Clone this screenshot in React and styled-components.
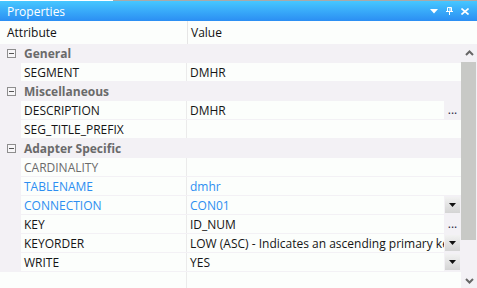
import React from 'react';
import styled, { createGlobalStyle } from 'styled-components';

const GlobalStyle = createGlobalStyle`
  body {
    margin: 0;
    background: #ffffff;
    font-family: "Open Sans", "Noto Sans", sans-serif;
    font-size: 12px;
  }
`;

const sections = [
  {
    name: 'General',
    rows: [{ attr: 'SEGMENT', value: 'DMHR' }],
  },
  {
    name: 'Miscellaneous',
    rows: [
      { attr: 'DESCRIPTION', value: 'DMHR', button: 'dots' },
      { attr: 'SEG_TITLE_PREFIX', value: '' },
    ],
  },
  {
    name: 'Adapter Specific',
    rows: [
      { attr: 'CARDINALITY', value: '', tone: 'muted' },
      { attr: 'TABLENAME', value: 'dmhr', tone: 'link' },
      { attr: 'CONNECTION', value: 'CON01', tone: 'link', button: 'drop' },
      { attr: 'KEY', value: 'ID_NUM', button: 'dots' },
      {
        attr: 'KEYORDER',
        value: 'LOW (ASC) - Indicates an ascending primary key',
        button: 'drop',
      },
      { attr: 'WRITE', value: 'YES', button: 'drop' },
    ],
  },
];

const App = () => {
  return (
    <>
      <GlobalStyle />
      <Panel>
        <TopEdge />
        <TitleBar>
          <TitleText>Properties</TitleText>
          <TitleIcons>
            <svg width="8" height="5" viewBox="0 0 8 5">
              <path d="M0 0h8L4 4.5z" fill="#fff" />
            </svg>
            <svg width="7" height="8" viewBox="0 0 7 8">
              <path d="M1.5 0.5h4v4h-4z M0 4.5h7 M3.5 4.5v3.5 M4 0.5v4" stroke="#fff" strokeWidth="1" fill="none" />
            </svg>
            <svg width="8" height="7" viewBox="0 0 8 7">
              <path d="M0.5 0.5l7 6 M7.5 0.5l-7 6" stroke="#fff" strokeWidth="1.6" />
            </svg>
          </TitleIcons>
        </TitleBar>

        <HeaderRow>
          <HeaderCell>Attribute</HeaderCell>
          <HeaderCell $value>Value</HeaderCell>
        </HeaderRow>

        <Body>
          <Grid>
            {sections.map(section => (
              <React.Fragment key={section.name}>
                <CategoryRow>
                  <ExpandBox />
                  <CategoryName>{section.name}</CategoryName>
                </CategoryRow>
                {section.rows.map(row => (
                  <PropRow key={row.attr}>
                    <Gutter />
                    <AttrCell $tone={row.tone}>{row.attr}</AttrCell>
                    <ValueWrap>
                      <ValueCell $tone={row.tone}>{row.value}</ValueCell>
                      {row.button === 'dots' && <DotsButton>...</DotsButton>}
                      {row.button === 'drop' && (
                        <DropButton>
                          <svg width="7" height="4" viewBox="0 0 7 4">
                            <path d="M0 0h7L3.5 4z" fill="#111" />
                          </svg>
                        </DropButton>
                      )}
                    </ValueWrap>
                  </PropRow>
                ))}
              </React.Fragment>
            ))}
            <EmptyArea>
              <EmptyAttr />
              <EmptyValue />
            </EmptyArea>
          </Grid>

          <Scrollbar>
            <ScrollArrow>
              <svg width="9" height="6" viewBox="0 0 9 6">
                <path d="M1 5l3.5-3.5L8 5" stroke="#666" strokeWidth="2" fill="none" />
              </svg>
            </ScrollArrow>
            <Thumb />
            <Track />
            <ScrollArrow $bottom>
              <svg width="9" height="6" viewBox="0 0 9 6">
                <path d="M1 1l3.5 3.5L8 1" stroke="#666" strokeWidth="2" fill="none" />
              </svg>
            </ScrollArrow>
          </Scrollbar>
        </Body>
      </Panel>
    </>
  );
};

export default App;

const Panel = styled.div`
  display: flex;
  flex-direction: column;
  width: 477px;
  height: 288px;
  overflow: hidden;
  background: #fcfefc;
`;

const TopEdge = styled.div`
  height: 1px;
  background: linear-gradient(to right, #ffffff 113px, #a9a9a9 113px);
`;

const TitleBar = styled.div`
  display: flex;
  align-items: center;
  height: 20px;
  padding: 0 7px;
  background: linear-gradient(to bottom, #46c7ff, #2b8ef3);
`;

const TitleText = styled.span`
  color: #ffffff;
  font-size: 12px;
  line-height: 20px;
  padding-top: 1px;
`;

const TitleIcons = styled.div`
  display: flex;
  align-items: center;
  gap: 8px;
  margin-left: auto;
  margin-right: 1px;
`;

const HeaderRow = styled.div`
  display: grid;
  grid-template-columns: 187px 1fr;
  height: 23px;
  background: #fcfefc;
`;

const HeaderCell = styled.div`
  display: flex;
  align-items: center;
  padding-left: ${p => (p.$value ? '3px' : '7px')};
  border-left: ${p => (p.$value ? '1px solid #e6e6e6' : 'none')};
  color: #111;
`;

const Body = styled.div`
  display: flex;
  flex: 1;
  min-height: 0;
`;

const Grid = styled.div`
  display: flex;
  flex-direction: column;
  flex: 1;
`;

const CategoryRow = styled.div`
  display: flex;
  align-items: center;
  height: 19px;
  background: #f3f1f5;
`;

const ExpandBox = styled.div`
  position: relative;
  box-sizing: border-box;
  width: 9px;
  height: 9px;
  margin-left: 7px;
  margin-right: 8px;
  border: 1px solid #8e8e8e;
  background: #f7f6f8;
  &::after {
    content: '';
    position: absolute;
    left: 1px;
    top: 3px;
    width: 5px;
    height: 1px;
    background: #555;
  }
`;

const CategoryName = styled.span`
  font-weight: bold;
  color: #6a6a6a;
`;

const PropRow = styled.div`
  display: grid;
  grid-template-columns: 21px 166px 1fr;
  height: 19px;
  box-sizing: border-box;
  background: #f3f1f5;
`;

const Gutter = styled.div`
  background: #f3f1f5;
`;

const toneColor = tone =>
  tone === 'link' ? '#2d8ef1' : tone === 'muted' ? '#6b6b6b' : '#151515';

const AttrCell = styled.div`
  display: flex;
  align-items: center;
  padding-left: 3px;
  height: 18px;
  background: #fcfefc;
  border-right: 1px solid #ebebeb;
  color: ${p => toneColor(p.$tone)};
  white-space: nowrap;
  overflow: hidden;
`;

const ValueWrap = styled.div`
  display: flex;
  height: 18px;
  min-width: 0;
`;

const ValueCell = styled.div`
  display: flex;
  align-items: center;
  flex: 1;
  min-width: 0;
  padding-left: 3px;
  background: #fcfefc;
  color: ${p => toneColor(p.$tone)};
  white-space: nowrap;
  overflow: hidden;
`;

const DotsButton = styled.div`
  display: flex;
  align-items: center;
  justify-content: center;
  width: 17px;
  background: #f3f1f5;
  color: #2a2440;
  font-size: 12px;
  line-height: 14px;
`;

const DropButton = styled.div`
  display: flex;
  align-items: center;
  justify-content: center;
  width: 15px;
  height: 16px;
  margin: 1px 1px 0 1px;
  background: linear-gradient(to bottom, #f2f2f2, #d4d4d4);
`;

const EmptyArea = styled.div`
  display: grid;
  grid-template-columns: 187px 1fr;
  flex: 1;
`;

const EmptyAttr = styled.div`
  background: #fcfefc;
  border-right: 1px solid #ebebeb;
`;

const EmptyValue = styled.div`
  background: #fcfefc;
`;

const Scrollbar = styled.div`
  display: flex;
  flex-direction: column;
  width: 16px;
  background: #f3f1f5;
`;

const ScrollArrow = styled.div`
  display: flex;
  align-items: ${p => (p.$bottom ? 'flex-end' : 'center')};
  justify-content: center;
  height: 18px;
  padding-bottom: ${p => (p.$bottom ? '4px' : '0')};
  box-sizing: border-box;
  flex-shrink: 0;
`;

const Thumb = styled.div`
  height: 178px;
  margin: 0 1px 0 0;
  background: #c8c9c6;
`;

const Track = styled.div`
  flex: 1;
`;
